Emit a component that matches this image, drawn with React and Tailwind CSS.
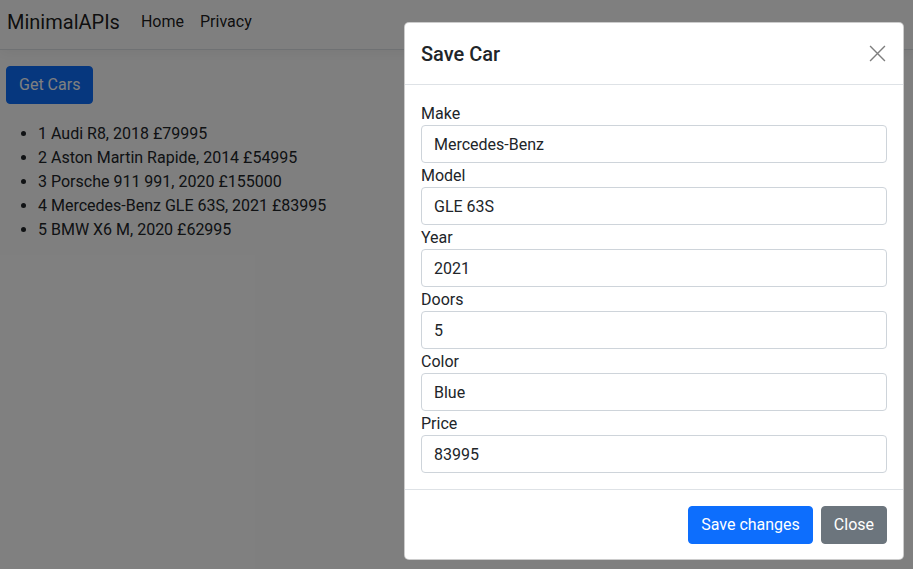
import React from "react";

const cars = [
  "1 Audi R8, 2018 £79995",
  "2 Aston Martin Rapide, 2014 £54995",
  "3 Porsche 911 991, 2020 £155000",
  "4 Mercedes-Benz GLE 63S, 2021 £83995",
  "5 BMW X6 M, 2020 £62995",
];

const fields = [
  { label: "Make", value: "Mercedes-Benz" },
  { label: "Model", value: "GLE 63S" },
  { label: "Year", value: "2021" },
  { label: "Doors", value: "5" },
  { label: "Color", value: "Blue" },
  { label: "Price", value: "83995" },
];

export default function App() {
  return (
    <div
      className="relative h-[569px] w-[913px] overflow-hidden bg-white text-[16px] leading-6 text-[#212529]"
      style={{ fontFamily: '"Segoe UI", Roboto, "Noto Sans", sans-serif' }}
    >
      {/* Navbar */}
      <nav className="flex h-[50px] items-center border-b border-[#dee2e6] bg-white px-[7px] pb-[5px] shadow-[0_0.25rem_0.75rem_rgba(0,0,0,0.05)]">
        <span className="mr-[13px] text-[20px] leading-[30px] text-black/90">MinimalAPIs</span>
        <a className="px-2 text-[16px] text-black/90">Home</a>
        <a className="px-2 text-[16px] text-black/90">Privacy</a>
      </nav>

      {/* Main */}
      <div className="px-[6px] pt-[16px]">
        <button className="h-[38px] rounded-[4px] border border-[#0d6efd] bg-[#0d6efd] px-3 text-white">
          Get Cars
        </button>
        <ul className="mt-[18px] list-disc pl-[32px]">
          {cars.map((c) => (
            <li key={c}>{c}</li>
          ))}
        </ul>
      </div>

      {/* Backdrop */}
      <div className="absolute inset-0 bg-black/50" />

      {/* Modal */}
      <div className="absolute left-[404px] top-[22px] w-[500px] rounded-[5px] border border-black/20 bg-white">
        <div className="flex h-[62px] items-center justify-between border-b border-[#dee2e6] px-4">
          <h5 className="text-[20px] font-medium leading-[30px]">Save Car</h5>
          <button className="mr-[-2px] flex h-[24px] w-[24px] items-center justify-center opacity-50">
            <svg width="17" height="17" viewBox="0 0 16 16" fill="none" stroke="#000" strokeWidth="1.3">
              <path d="M1 1L15 15M15 1L1 15" />
            </svg>
          </button>
        </div>
        <div className="p-4">
          {fields.map((f) => (
            <div key={f.label}>
              <label className="block pt-px leading-[23px]">{f.label}</label>
              <div className="h-[38px] rounded-[4px] border border-[#ced4da] px-3 pb-[5px] pt-[7px]">{f.value}</div>
            </div>
          ))}
        </div>
        <div className="flex justify-end gap-2 border-t border-[#dee2e6] px-4 pb-[15px] pt-[16px]">
          <button className="h-[38px] rounded-[4px] border border-[#0d6efd] bg-[#0d6efd] px-3 text-white">
            Save changes
          </button>
          <button className="h-[38px] rounded-[4px] border border-[#6c757d] bg-[#6c757d] px-3 text-white">
            Close
          </button>
        </div>
      </div>
    </div>
  );
}
